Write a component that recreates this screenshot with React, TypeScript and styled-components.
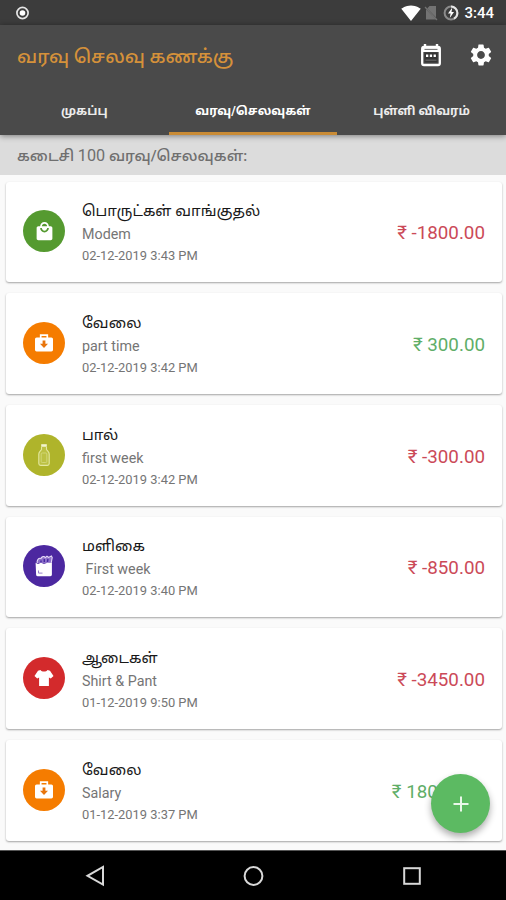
import React from 'react';
import styled, { createGlobalStyle } from 'styled-components';
import {
  MdSettings,
  MdLocalMall,
  MdSignalWifi4Bar,
} from 'react-icons/md';

const GlobalStyle = createGlobalStyle`
  * { box-sizing: border-box; }
  body {
    margin: 0;
    background: #fafafa;
    font-family: Roboto, "Noto Sans Tamil", "Noto Sans", sans-serif;
  }
`;

const Screen = styled.div`
  position: relative;
  display: flex;
  flex-direction: column;
  width: 506px;
  height: 900px;
  overflow: hidden;
  background: #fafafa;
`;

const StatusBar = styled.div`
  display: flex;
  align-items: center;
  justify-content: space-between;
  flex: none;
  height: 25px;
  padding: 0 12px 0 15px;
  background: #3c3c3c;
  color: #fff;
`;

const StatusIcons = styled.div`
  display: flex;
  align-items: center;
  gap: 5px;
  height: 25px;
  svg { display: block; }
  svg:first-child { margin-right: -2px; }
`;

const Clock = styled.span`
  font-size: 15px;
  line-height: 25px;
  padding-top: 2px;
  font-weight: 500;
`;

const Header = styled.header`
  position: relative;
  z-index: 1;
  flex: none;
  height: 110px;
  background: #4a4a4a;
  box-shadow: 0 1px 6px rgba(0, 0, 0, 0.45);
`;

const AppBar = styled.div`
  display: flex;
  align-items: center;
  height: 60px;
  padding: 0 12px 0 17px;
  color: #fff;
  svg { display: block; }
`;

const Title = styled.h1`
  flex: 1;
  margin: 0;
  padding-top: 3px;
  font-size: 18.8px;
  line-height: 30px;
  font-weight: 500;
  white-space: nowrap;
  color: #d5913a;
`;

const Actions = styled.div`
  display: flex;
  align-items: center;
  gap: 26px;
`;

const Tabs = styled.nav`
  display: grid;
  grid-template-columns: repeat(3, 1fr);
  height: 50px;
`;

const Tab = styled.div<{ $active?: boolean }>`
  display: flex;
  align-items: center;
  justify-content: center;
  padding-top: 4px;
  border-bottom: 3px solid ${(p) => (p.$active ? '#c98b35' : 'transparent')};
  color: ${(p) => (p.$active ? '#fff' : '#ececec')};
  font-size: 12.2px;
  font-weight: 700;
  line-height: 20px;
  white-space: nowrap;
`;

const Subheader = styled.div`
  flex: none;
  height: 40px;
  padding: 2px 17px 0;
  background: #dcdcdc;
  color: #6f6f6f;
  font-size: 15.1px;
  line-height: 38px;
  font-weight: 500;
  white-space: nowrap;
`;

const Count = styled.span`
  font-size: 16.2px;
  font-weight: 400;
`;

const List = styled.main`
  display: flex;
  flex-direction: column;
  flex: 1;
  gap: 11px;
  min-height: 0;
  padding: 6.5px 4px 0 6px;
  overflow: hidden;
`;

const Card = styled.article`
  display: flex;
  align-items: center;
  flex: none;
  height: 100.7px;
  padding: 0 17px;
  border-radius: 3px;
  background: #fff;
  box-shadow: 0 1px 2px rgba(0, 0, 0, 0.35);
`;

const Badge = styled.div<{ $color: string }>`
  display: flex;
  align-items: center;
  justify-content: center;
  width: 42px;
  height: 42px;
  margin-top: -1px;
  border-radius: 50%;
  background: ${(p) => p.$color};
  color: #fff;
`;

const Details = styled.div`
  flex: 1;
  padding: 2px 0 0 17px;
  white-space: pre;
`;

const Category = styled.div`
  height: 25px;
  font-size: 15.1px;
  line-height: 26px;
  color: #181818;
`;

const Note = styled.div`
  height: 24px;
  font-size: 14.3px;
  line-height: 23px;
  color: #757575;
`;

const Stamp = styled.div`
  height: 20px;
  font-size: 12.9px;
  line-height: 18px;
  color: #757575;
`;

const Amount = styled.div<{ $income?: boolean }>`
  margin-top: 3px;
  font-size: 18.8px;
  line-height: 24px;
  color: ${(p) => (p.$income ? '#5fae68' : '#cb4a58')};
  white-space: pre;
`;

const AddButton = styled.button`
  position: absolute;
  z-index: 2;
  left: 431px;
  top: 774px;
  display: flex;
  align-items: center;
  justify-content: center;
  width: 59px;
  height: 59px;
  padding: 0;
  border: 0;
  border-radius: 50%;
  background: #5cba62;
  box-shadow: 0 4px 7px rgba(0, 0, 0, 0.32);
`;

const NavBar = styled.footer`
  display: flex;
  align-items: center;
  justify-content: space-between;
  flex: none;
  height: 50px;
  padding: 0 84px;
  border-top: 1px solid #555;
  background: #000;
`;

const RecordIcon = () => (
  <svg width="15" height="15" viewBox="0 0 15 15">
    <circle cx="7.5" cy="8" r="5.6" fill="none" stroke="#e4e4e4" strokeWidth="1.7" />
    <circle cx="7.5" cy="8" r="2.8" fill="#fff" />
  </svg>
);

const NoSimIcon = () => (
  <svg width="14" height="16" viewBox="0 0 14 16">
    <path d="M5.5 1H12v11.5L3.2 3.4z M2 4.3 12 14.5H2z" fill="#737373" />
    <path d="M1 2l12 13" stroke="#737373" strokeWidth="1.2" />
  </svg>
);

const BatteryIcon = () => (
  <svg width="16" height="16" viewBox="0 0 16 16">
    <circle cx="8" cy="8" r="6.4" fill="none" stroke="#8b8b8b" strokeWidth="2" />
    <path d="M8 1.6A6.4 6.4 0 0 1 14.4 8 6.4 6.4 0 0 1 11 13.6" fill="none" stroke="#e5e5e5" strokeWidth="2" />
    <path d="M9.3 2.5 5 8.6h2.6L6.8 13 11 7H8.5z" fill="#fff" />
  </svg>
);

const CalendarIcon = () => (
  <svg width="22" height="24" viewBox="0 0 22 24">
    <path d="M5 1v4M17 1v4" stroke="#fff" strokeWidth="2.4" />
    <rect x="2.2" y="4" width="17.6" height="18" rx="1.8" fill="none" stroke="#fff" strokeWidth="2.3" />
    <path d="M2 4h18v5H2z" fill="#fff" />
    <path d="M4.5 6.4h13" stroke="#777" strokeWidth="1.1" />
    <path d="M4.5 9.6h13v9.8h-13z" fill="#343434" />
    <path d="M6 12.8h2.3M9.8 12.8h2.3M13.6 12.8h2.3" stroke="#fff" strokeWidth="2.4" />
    <path d="M5.5 17.2h11" stroke="#666" strokeWidth="1.2" />
  </svg>
);

const WorkIcon = () => (
  <svg width="20" height="20" viewBox="0 0 20 20">
    <path d="M6.7 5V2.2h6.6V5" fill="none" stroke="#fff" strokeWidth="1.7" />
    <rect x="1" y="4.4" width="18" height="14" rx="1.6" fill="#fff" />
    <path d="M8.6 7.5h2.8v3.2h2.6L10 15l-4-4.3h2.6z" fill="#e8750c" />
  </svg>
);

const MilkIcon = () => (
  <svg width="14" height="24" viewBox="0 0 14 24">
    <rect x="4.2" y="1.2" width="5.6" height="2.6" fill="#f2f4cf" />
    <path
      d="M4.5 4v2.3C4.2 7.7 1.8 8.8 1.8 11v9.6c0 1.2.6 1.8 1.8 1.8h6.8c1.2 0 1.8-.6 1.8-1.8V11c0-2.2-2.4-3.3-2.7-4.7V4"
      fill="#bcc143"
      stroke="#e3e8a0"
      strokeWidth="1.1"
    />
    <rect x="4.2" y="10" width="5.6" height="9.5" rx="1" fill="none" stroke="#d3d87c" strokeWidth=".9" />
  </svg>
);

const GroceryIcon = () => (
  <svg width="20" height="24" viewBox="0 0 20 24">
    <path
      d="M3.2 9C2.6 6 4.6 3.6 7 4.4c.6-2.2 3.4-2.4 4.3-.7L13 2.2l1.6 1.2L17.4 2l.8 1.5-1.1 6"
      fill="#8d70c9"
      stroke="#e8ddf8"
      strokeWidth="1.1"
    />
    <path d="M7 6.5v2M10.3 5v3M14 5l-.6 3" stroke="#4527a0" strokeWidth="1.4" />
    <path d="M1.6 8.7 4 10l3-1.2 3 1.3 3.4-1.3 4.5.2V20.5c0 1-.6 1.7-1.6 1.7H3.6c-1 0-1.4-.7-1.5-1.7z" fill="#fff" />
    <path d="M4.5 16.5v2.6h4" fill="none" stroke="#9a80cc" strokeWidth="1" />
  </svg>
);

const ShirtIcon = () => (
  <svg width="20" height="18" viewBox="0 0 20 18">
    <path d="M6.5 1c1.2 2 5.8 2 7 0L16 1.8 19.5 7l-2.7 2.4-1.9-1V17H5.1V8.4l-1.9 1L.5 7 4 1.8z" fill="#fff" />
  </svg>
);

const PlusIcon = () => (
  <svg width="16" height="16" viewBox="0 0 16 16">
    <path d="M8 .5v15M.5 8h15" stroke="#e9f7e9" strokeWidth="2" />
  </svg>
);

const BackIcon = () => (
  <svg width="22" height="22" viewBox="0 0 22 22">
    <path d="M19 2v17.5L3.5 10.8z" fill="none" stroke="#d8d8d8" strokeWidth="2" />
  </svg>
);

const HomeIcon = () => (
  <svg width="22" height="22" viewBox="0 0 22 22">
    <circle cx="10.5" cy="11" r="8.9" fill="none" stroke="#d8d8d8" strokeWidth="2" />
  </svg>
);

const RecentsIcon = () => (
  <svg width="20" height="20" viewBox="0 0 20 20">
    <rect x="2.2" y="2.2" width="15.6" height="15.6" fill="none" stroke="#d8d8d8" strokeWidth="2" />
  </svg>
);

interface Entry {
  category: string;
  note: string;
  stamp: string;
  amount: string;
  income?: boolean;
  color: string;
  icon: React.ReactNode;
}

const entries: Entry[] = [
  { category: 'பொருட்கள் வாங்குதல்', note: 'Modem', stamp: '02-12-2019 3:43 PM', amount: '₹ -1800.00', color: '#559a30', icon: <MdLocalMall size={21} /> },
  { category: 'வேலை', note: 'part time', stamp: '02-12-2019 3:42 PM', amount: '₹ 300.00', income: true, color: '#f57c00', icon: <WorkIcon /> },
  { category: 'பால்', note: 'first week', stamp: '02-12-2019 3:42 PM', amount: '₹ -300.00', color: '#afb42b', icon: <MilkIcon /> },
  { category: 'மளிகை', note: ' First week', stamp: '02-12-2019 3:40 PM', amount: '₹ -850.00', color: '#4c28a0', icon: <GroceryIcon /> },
  { category: 'ஆடைகள்', note: 'Shirt & Pant', stamp: '01-12-2019 9:50 PM', amount: '₹ -3450.00', color: '#d32a2c', icon: <ShirtIcon /> },
  { category: 'வேலை', note: 'Salary', stamp: '01-12-2019 3:37 PM', amount: '₹ 18000.00', income: true, color: '#f57c00', icon: <WorkIcon /> },
];

export default function App() {
  return (
    <Screen>
      <GlobalStyle />
      <StatusBar>
        <RecordIcon />
        <StatusIcons>
          <MdSignalWifi4Bar size={20} />
          <NoSimIcon />
          <BatteryIcon />
          <Clock>3:44</Clock>
        </StatusIcons>
      </StatusBar>
      <Header>
        <AppBar>
          <Title>வரவு செலவு கணக்கு</Title>
          <Actions>
            <CalendarIcon />
            <MdSettings size={26} />
          </Actions>
        </AppBar>
        <Tabs>
          <Tab>முகப்பு</Tab>
          <Tab $active>வரவு/செலவுகள்</Tab>
          <Tab>புள்ளி விவரம்</Tab>
        </Tabs>
      </Header>
      <Subheader>
        கடைசி <Count>100</Count> வரவு/செலவுகள்:
      </Subheader>
      <List>
        {entries.map((e) => (
          <Card key={e.stamp + e.note}>
            <Badge $color={e.color}>{e.icon}</Badge>
            <Details>
              <Category>{e.category}</Category>
              <Note>{e.note}</Note>
              <Stamp>{e.stamp}</Stamp>
            </Details>
            <Amount $income={e.income}>{e.amount}</Amount>
          </Card>
        ))}
      </List>
      <AddButton aria-label="Add">
        <PlusIcon />
      </AddButton>
      <NavBar>
        <BackIcon />
        <HomeIcon />
        <RecentsIcon />
      </NavBar>
    </Screen>
  );
}
